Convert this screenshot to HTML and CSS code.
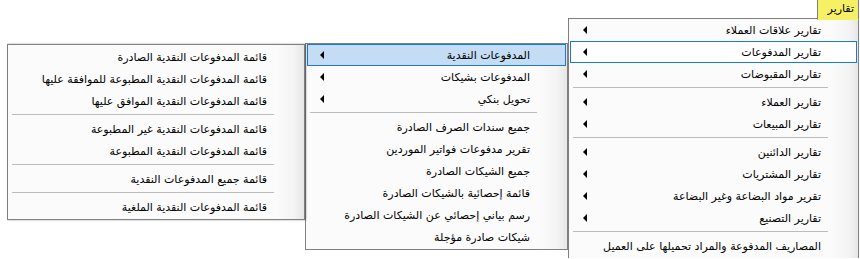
FILE: index.html
```html
<!DOCTYPE html>
<html lang="ar">
<head>
  <meta charset="UTF-8" />
  <title>تقارير</title>
  <link rel="stylesheet" href="styles.css">
</head>
<body>

<div class="screen">

  <!-- third level: المدفوعات النقدية -->
  <div class="menu sub3">
    <div class="item"><span class="label">قائمة المدفوعات النقدية الصادرة</span></div>
    <div class="item"><span class="label">قائمة المدفوعات النقدية المطبوعة للموافقة عليها</span></div>
    <div class="item"><span class="label">قائمة المدفوعات النقدية الموافق عليها</span></div>
    <div class="sep"></div>
    <div class="item"><span class="label">قائمة المدفوعات النقدية غير المطبوعة</span></div>
    <div class="item"><span class="label">قائمة المدفوعات النقدية المطبوعة</span></div>
    <div class="sep"></div>
    <div class="item"><span class="label">قائمة جميع المدفوعات النقدية</span></div>
    <div class="sep"></div>
    <div class="item"><span class="label">قائمة المدفوعات النقدية الملغية</span></div>
  </div>

  <!-- second level: تقارير المدفوعات -->
  <div class="menu sub2">
    <div class="item selected"><span class="label">المدفوعات النقدية</span><span class="arrow"></span></div>
    <div class="item"><span class="label">المدفوعات بشيكات</span><span class="arrow"></span></div>
    <div class="item"><span class="label">تحويل بنكي</span><span class="arrow"></span></div>
    <div class="sep"></div>
    <div class="item"><span class="label">جميع سندات الصرف الصادرة</span></div>
    <div class="item"><span class="label">تقرير مدفوعات فواتير الموردين</span></div>
    <div class="item"><span class="label">جميع الشيكات الصادرة</span></div>
    <div class="item"><span class="label">قائمة إحصائية بالشيكات الصادرة</span></div>
    <div class="item"><span class="label">رسم بياني إحصائي عن الشيكات الصادرة</span></div>
    <div class="item"><span class="label">شيكات صادرة مؤجلة</span></div>
  </div>

  <!-- top level -->
  <div class="main-col">
    <div class="menubar"><span class="menubar-item">تقارير</span></div>
    <div class="menu main">
      <div class="item"><span class="label">تقارير علاقات العملاء</span><span class="arrow"></span></div>
      <div class="item focused"><span class="label">تقارير المدفوعات</span><span class="arrow"></span></div>
      <div class="item"><span class="label">تقارير المقبوضات</span><span class="arrow"></span></div>
      <div class="sep"></div>
      <div class="item"><span class="label">تقارير العملاء</span><span class="arrow"></span></div>
      <div class="item"><span class="label">تقارير المبيعات</span><span class="arrow"></span></div>
      <div class="sep"></div>
      <div class="item"><span class="label">تقارير الدائنين</span><span class="arrow"></span></div>
      <div class="item"><span class="label">تقارير المشتريات</span><span class="arrow"></span></div>
      <div class="item"><span class="label">تقرير مواد البضاعة وغير البضاعة</span><span class="arrow"></span></div>
      <div class="item"><span class="label">تقارير التصنيع</span><span class="arrow"></span></div>
      <div class="sep"></div>
      <div class="item"><span class="label">المصاريف المدفوعة والمراد تحميلها على العميل</span></div>
    </div>
  </div>

</div>

</body>
</html>
```

FILE: styles.css
```css
body {
  margin: 0;
  background: #ffffff;
  font-family: "DejaVu Sans", sans-serif;
  font-size: 11px;
  color: #000000;
  overflow: hidden;
}
.screen {
  display: flex;
  align-items: flex-start;
  padding-left: 7px;
  height: 259px;
}
.menu {
  box-sizing: border-box;
  border: 1px solid #808080;
  background: linear-gradient(to left, #e6e6e6 0, #f4f4f4 10px, #fbfbfb 28px);
  padding: 1px 0;
}
.sub3 {
  width: 298px;
  margin-top: 44px;
  box-shadow: 1px 0 2px rgba(0, 0, 0, 0.35);
  position: relative;
  z-index: 2;
}
.sub2 {
  width: 263px;
  margin-top: 43px;
  padding-top: 0;
  position: relative;
  z-index: 1;
}
.main-col {
  width: 291px;
  display: flex;
  flex-direction: column;
  align-items: flex-end;
}
.main {
  width: 291px;
  border-bottom: none;
  padding-top: 0;
  height: 240px;
}
.menubar {
  height: 19px;
  margin-bottom: -1px;
  position: relative;
  z-index: 3;
}
.menubar-item {
  box-sizing: border-box;
  display: block;
  width: 42px;
  height: 20px;
  line-height: 18px;
  background: #f6f064;
  border-left: 1px solid #808080;
  border-right: 1px solid #808080;
  border-bottom: 1px solid #f6f064;
  direction: rtl;
  padding-right: 4px;
  text-align: right;
}
.item {
  box-sizing: border-box;
  height: 22px;
  display: flex;
  direction: rtl;
  align-items: center;
  padding-right: 35px;
  padding-left: 12px;
  border: 1px solid transparent;
  margin: 0 1px;
}
.label {
  flex: 1;
  white-space: nowrap;
}
.arrow {
  width: 0;
  height: 0;
  border-top: 4px solid transparent;
  border-bottom: 4px solid transparent;
  border-right: 4px solid #000000;
}
.focused {
  border-color: #1979d4;
  background: #ffffff;
}
.selected {
  border-color: #1979d4;
  background: #c5dcf5;
}
.sep {
  height: 1px;
  background: #bcbcbc;
  margin: 2px 30px 3px 4px;
}
```
